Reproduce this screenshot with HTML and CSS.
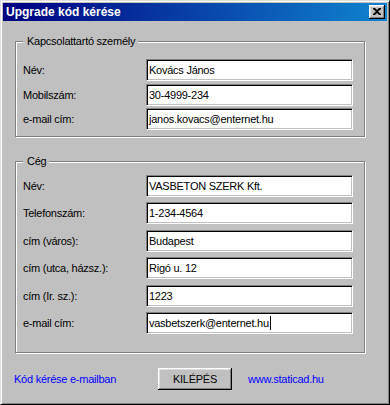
FILE: index.html
```html
<!DOCTYPE html>
<html lang="hu">
<head>
  <meta charset="UTF-8" />
  <title>Upgrade kód kérése</title>
  <link rel="stylesheet" href="styles.css">
</head>
<body>
  <div class="window">
    <div class="titlebar">
      <span class="title">Upgrade kód kérése</span>
      <button class="close" title="Bezárás">
        <svg width="8" height="7" viewBox="0 0 8 7">
          <path d="M0 0h2l2 2 2-2h2v1L5 3.5 8 6v1H6L4 5 2 7H0V6l3-2.5L0 1z" fill="#000"/>
        </svg>
      </button>
    </div>

    <div class="content">
      <fieldset class="group group-contact">
        <legend>Kapcsolattartó személy</legend>
        <div class="rows">
          <span class="label">Név:</span>
          <div class="field">Kovács János</div>
          <span class="label">Mobilszám:</span>
          <div class="field">30-4999-234</div>
          <span class="label">e-mail cím:</span>
          <div class="field">janos.kovacs@enternet.hu</div>
        </div>
      </fieldset>

      <fieldset class="group group-company">
        <legend>Cég</legend>
        <div class="rows">
          <span class="label">Név:</span>
          <div class="field">VASBETON SZERK Kft.</div>
          <span class="label">Telefonszám:</span>
          <div class="field">1-234-4564</div>
          <span class="label">cím (város):</span>
          <div class="field">Budapest</div>
          <span class="label">cím (utca, házsz.):</span>
          <div class="field">Rigó u. 12</div>
          <span class="label">cím (Ir. sz.):</span>
          <div class="field">1223</div>
          <span class="label">e-mail cím:</span>
          <div class="field">vasbetszerk@enternet.hu<span class="caret"></span></div>
        </div>
      </fieldset>

      <div class="footer">
        <a href="#" class="link">Kód kérése e-mailban</a>
        <button class="btn">KILÉPÉS</button>
        <a href="#" class="link">www.staticad.hu</a>
      </div>
    </div>
  </div>
</body>
</html>
```

FILE: styles.css
```css
body {
  margin: 0;
  font-family: "Liberation Sans", Arial, sans-serif;
  font-size: 11px;
  letter-spacing: -0.25px;
  color: #000;
}

.window {
  width: 390px;
  height: 405px;
  box-sizing: border-box;
  background: #c0c0c0;
  border: 1px solid;
  border-color: #dfdfdf #000 #000 #dfdfdf;
  box-shadow: inset 1px 1px #fff, inset -1px -1px #808080;
  padding: 2px;
}

.titlebar {
  height: 18px;
  display: flex;
  align-items: center;
  justify-content: space-between;
  padding: 0 2px 0 3px;
  background: linear-gradient(to right, #000080, #1084d0);
}

.title {
  color: #fff;
  font-weight: bold;
  font-size: 12px;
  letter-spacing: 0;
}

.close {
  width: 16px;
  height: 14px;
  padding: 0 1px 1px 0;
  border: none;
  background: #c0c0c0;
  box-shadow: inset -1px -1px #000, inset 1px 1px #fff, inset -2px -2px #808080, inset 2px 2px #dfdfdf;
  display: flex;
  align-items: center;
  justify-content: center;
}

.close svg {
  display: block;
}

.content {
  padding: 14px 22px 0 12px;
}

.group {
  margin: 0;
  min-width: 0;
  border: 1px solid #808080;
  box-shadow: inset 1px 1px #fff, 1px 1px #fff;
}

.group legend {
  padding: 0 3px 0 4px;
  line-height: 13px;
  background: #c0c0c0;
}

.group-contact {
  padding: 11px 0 6px 7px;
}

.group-company {
  margin-top: 18px;
  padding: 7px 0 18px 7px;
}

.rows {
  display: grid;
  grid-template-columns: 123px 207px;
  align-items: center;
}

.group-contact .rows {
  row-gap: 2.5px;
}

.group-company .rows {
  row-gap: 5.4px;
}

.field {
  height: 22px;
  box-sizing: border-box;
  background: #fff;
  border: 1px solid;
  border-color: #808080 #fff #fff #808080;
  box-shadow: inset 1px 1px #000, inset -1px -1px #c0c0c0;
  padding: 0 2px;
  display: flex;
  align-items: center;
  white-space: nowrap;
  overflow: hidden;
}

.caret {
  display: inline-block;
  width: 1px;
  height: 14px;
  margin-left: 1px;
  background: #000;
}

.footer {
  margin: 15px 0 0 -1px;
  display: grid;
  grid-template-columns: 128px 74px auto;
  column-gap: 16px;
  align-items: center;
}

.link {
  color: #0000ff;
  text-decoration: none;
}

.btn {
  width: 74px;
  height: 22px;
  padding: 0;
  border: none;
  background: #c0c0c0;
  box-shadow: inset -1px -1px #000, inset 1px 1px #fff, inset -2px -2px #808080, inset 2px 2px #dfdfdf;
  font-family: inherit;
  font-size: 11px;
  letter-spacing: inherit;
  color: #000;
}
```
